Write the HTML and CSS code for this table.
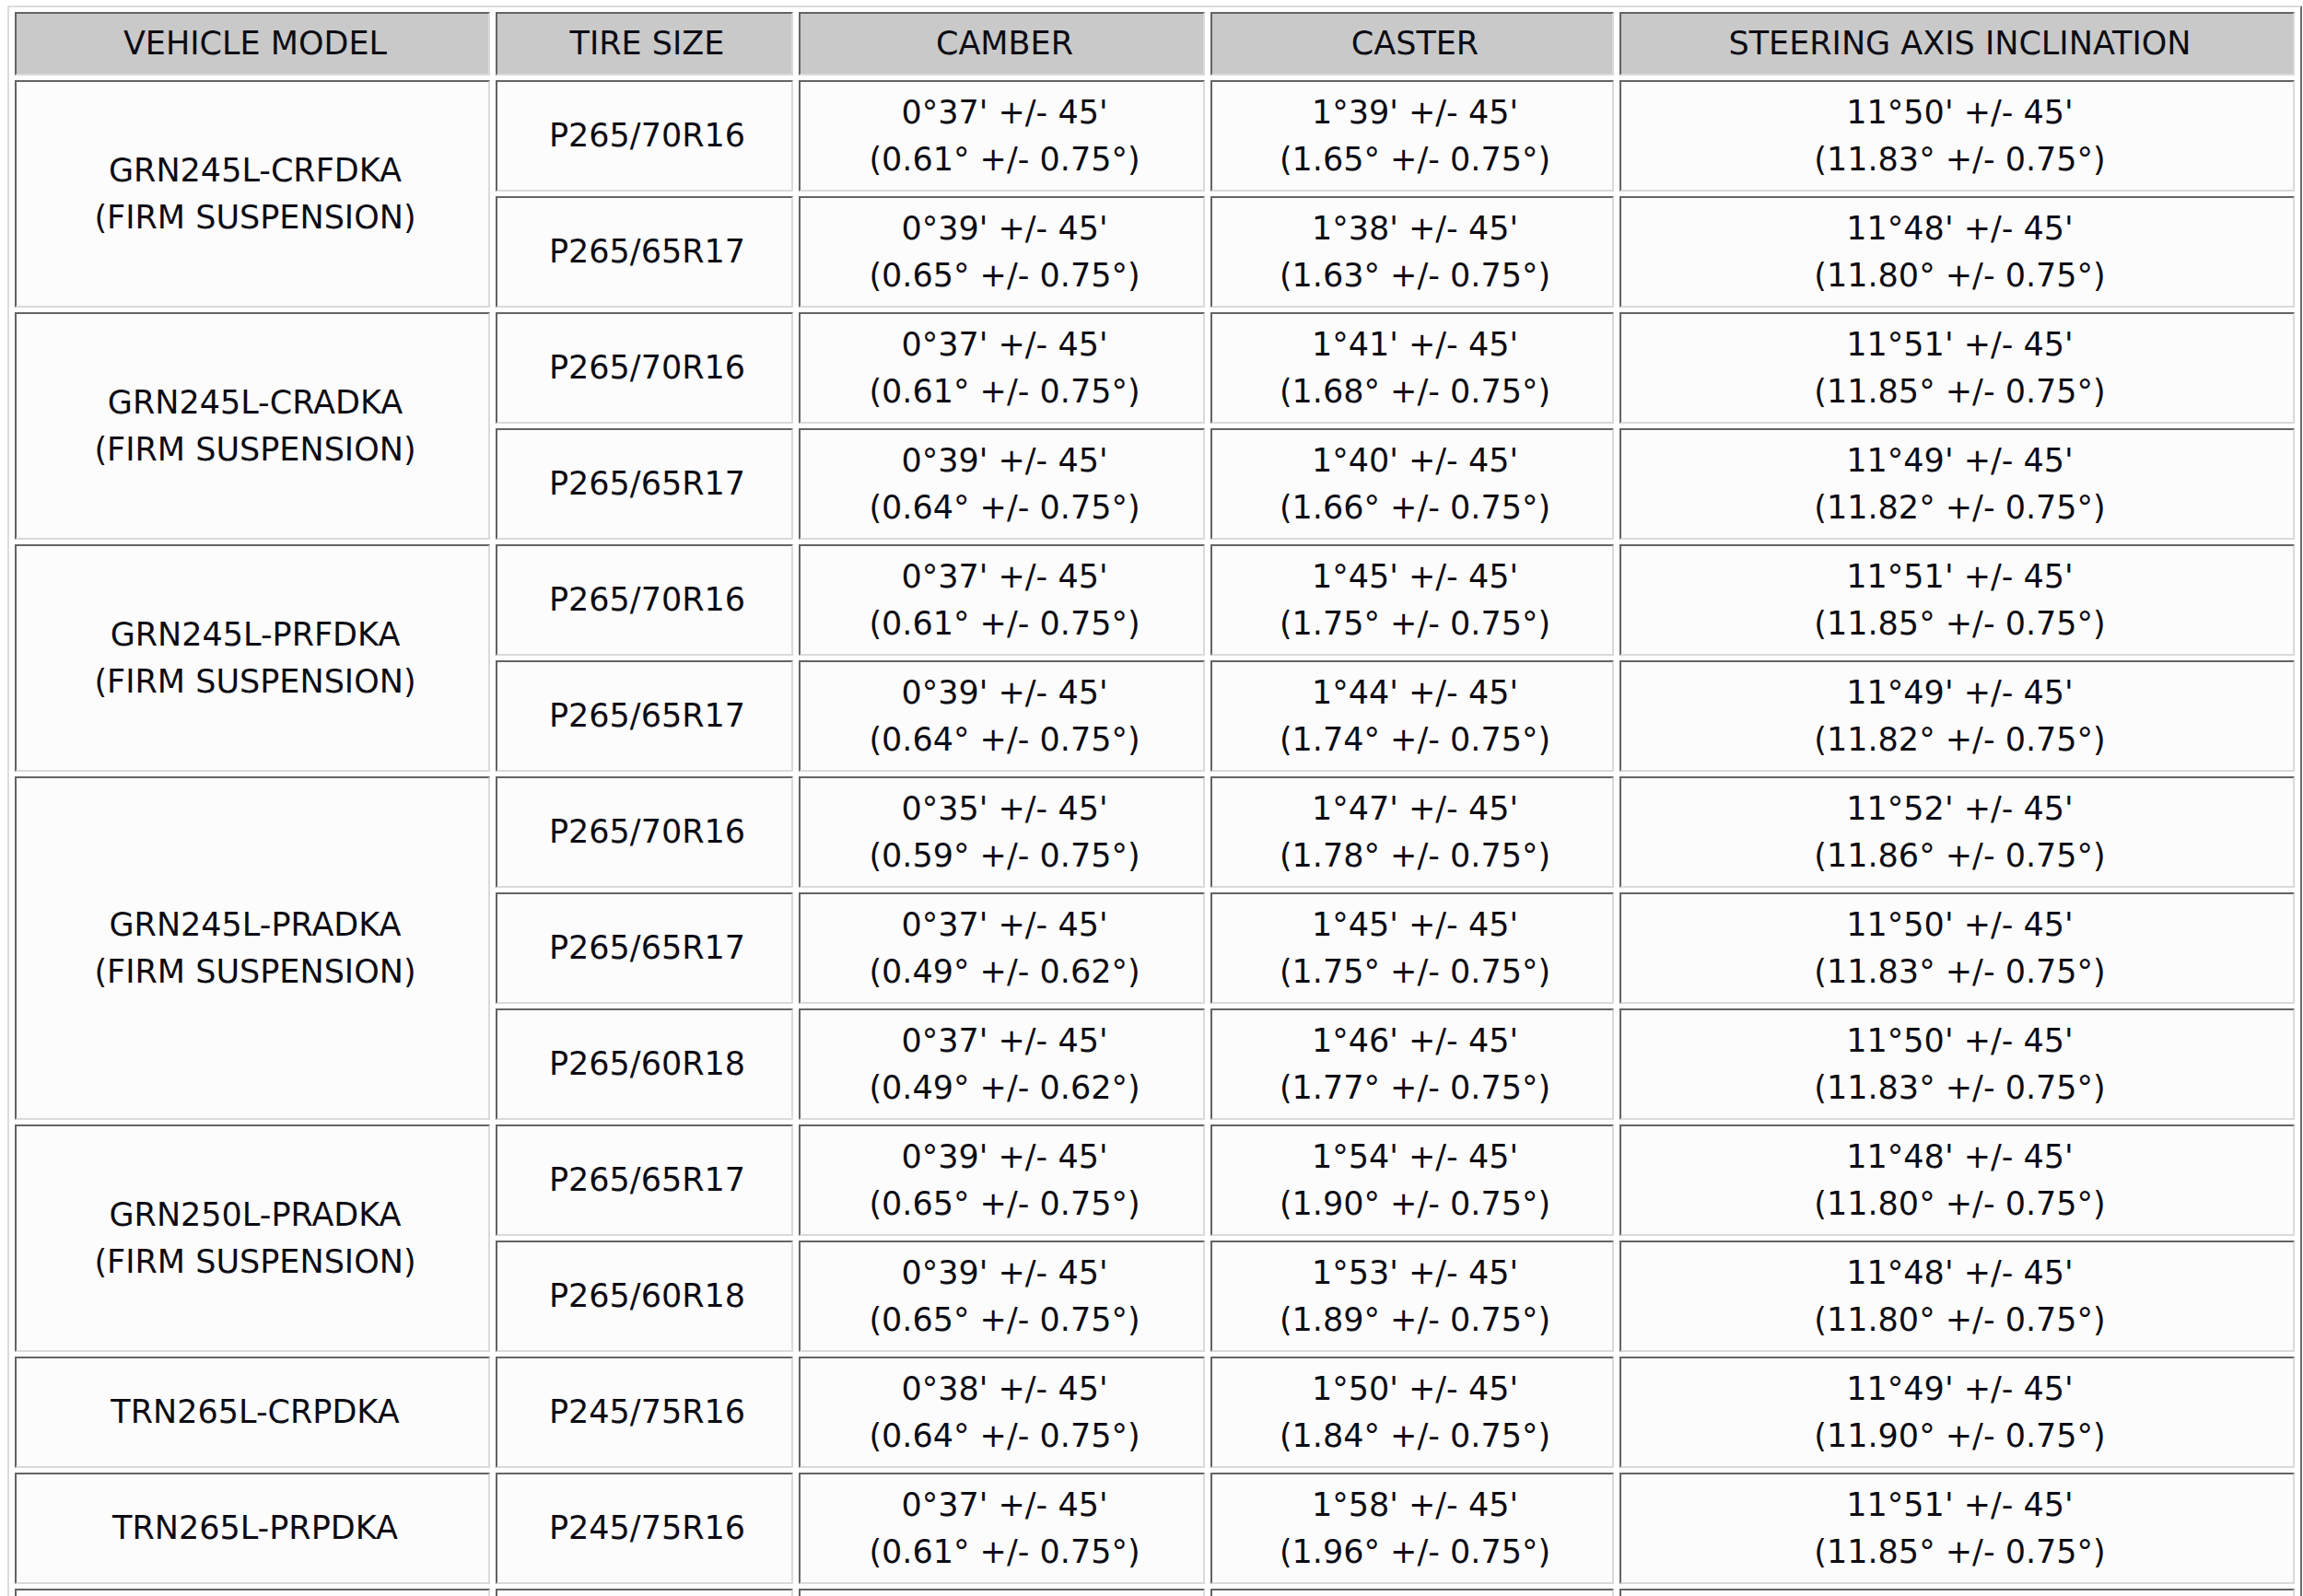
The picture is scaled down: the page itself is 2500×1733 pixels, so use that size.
FILE: index.html
```html
<!DOCTYPE html>
<html lang="en">
<head>
<meta charset="utf-8">
<title>Alignment Specifications</title>
<link rel="stylesheet" href="styles.css">
</head>
<body>
<table class="spec">
  <thead>
    <tr class="head">
      <th class="c-model">VEHICLE MODEL</th>
      <th class="c-tire">TIRE SIZE</th>
      <th class="c-camber">CAMBER</th>
      <th class="c-caster">CASTER</th>
      <th class="c-sai">STEERING AXIS INCLINATION</th>
    </tr>
  </thead>
  <tbody>
    <tr class="r">
      <td rowspan="2">GRN245L-CRFDKA<br>(FIRM SUSPENSION)</td>
      <td>P265/70R16</td>
      <td>0°37' +/- 45'<br>(0.61° +/- 0.75°)</td>
      <td>1°39' +/- 45'<br>(1.65° +/- 0.75°)</td>
      <td>11°50' +/- 45'<br>(11.83° +/- 0.75°)</td>
    </tr>
    <tr class="r">
      <td>P265/65R17</td>
      <td>0°39' +/- 45'<br>(0.65° +/- 0.75°)</td>
      <td>1°38' +/- 45'<br>(1.63° +/- 0.75°)</td>
      <td>11°48' +/- 45'<br>(11.80° +/- 0.75°)</td>
    </tr>
    <tr class="r">
      <td rowspan="2">GRN245L-CRADKA<br>(FIRM SUSPENSION)</td>
      <td>P265/70R16</td>
      <td>0°37' +/- 45'<br>(0.61° +/- 0.75°)</td>
      <td>1°41' +/- 45'<br>(1.68° +/- 0.75°)</td>
      <td>11°51' +/- 45'<br>(11.85° +/- 0.75°)</td>
    </tr>
    <tr class="r">
      <td>P265/65R17</td>
      <td>0°39' +/- 45'<br>(0.64° +/- 0.75°)</td>
      <td>1°40' +/- 45'<br>(1.66° +/- 0.75°)</td>
      <td>11°49' +/- 45'<br>(11.82° +/- 0.75°)</td>
    </tr>
    <tr class="r">
      <td rowspan="2">GRN245L-PRFDKA<br>(FIRM SUSPENSION)</td>
      <td>P265/70R16</td>
      <td>0°37' +/- 45'<br>(0.61° +/- 0.75°)</td>
      <td>1°45' +/- 45'<br>(1.75° +/- 0.75°)</td>
      <td>11°51' +/- 45'<br>(11.85° +/- 0.75°)</td>
    </tr>
    <tr class="r">
      <td>P265/65R17</td>
      <td>0°39' +/- 45'<br>(0.64° +/- 0.75°)</td>
      <td>1°44' +/- 45'<br>(1.74° +/- 0.75°)</td>
      <td>11°49' +/- 45'<br>(11.82° +/- 0.75°)</td>
    </tr>
    <tr class="r">
      <td rowspan="3">GRN245L-PRADKA<br>(FIRM SUSPENSION)</td>
      <td>P265/70R16</td>
      <td>0°35' +/- 45'<br>(0.59° +/- 0.75°)</td>
      <td>1°47' +/- 45'<br>(1.78° +/- 0.75°)</td>
      <td>11°52' +/- 45'<br>(11.86° +/- 0.75°)</td>
    </tr>
    <tr class="r">
      <td>P265/65R17</td>
      <td>0°37' +/- 45'<br>(0.49° +/- 0.62°)</td>
      <td>1°45' +/- 45'<br>(1.75° +/- 0.75°)</td>
      <td>11°50' +/- 45'<br>(11.83° +/- 0.75°)</td>
    </tr>
    <tr class="r">
      <td>P265/60R18</td>
      <td>0°37' +/- 45'<br>(0.49° +/- 0.62°)</td>
      <td>1°46' +/- 45'<br>(1.77° +/- 0.75°)</td>
      <td>11°50' +/- 45'<br>(11.83° +/- 0.75°)</td>
    </tr>
    <tr class="r">
      <td rowspan="2">GRN250L-PRADKA<br>(FIRM SUSPENSION)</td>
      <td>P265/65R17</td>
      <td>0°39' +/- 45'<br>(0.65° +/- 0.75°)</td>
      <td>1°54' +/- 45'<br>(1.90° +/- 0.75°)</td>
      <td>11°48' +/- 45'<br>(11.80° +/- 0.75°)</td>
    </tr>
    <tr class="r">
      <td>P265/60R18</td>
      <td>0°39' +/- 45'<br>(0.65° +/- 0.75°)</td>
      <td>1°53' +/- 45'<br>(1.89° +/- 0.75°)</td>
      <td>11°48' +/- 45'<br>(11.80° +/- 0.75°)</td>
    </tr>
    <tr class="r">
      <td>TRN265L-CRPDKA</td>
      <td>P245/75R16</td>
      <td>0°38' +/- 45'<br>(0.64° +/- 0.75°)</td>
      <td>1°50' +/- 45'<br>(1.84° +/- 0.75°)</td>
      <td>11°49' +/- 45'<br>(11.90° +/- 0.75°)</td>
    </tr>
    <tr class="r">
      <td>TRN265L-PRPDKA</td>
      <td>P245/75R16</td>
      <td>0°37' +/- 45'<br>(0.61° +/- 0.75°)</td>
      <td>1°58' +/- 45'<br>(1.96° +/- 0.75°)</td>
      <td>11°51' +/- 45'<br>(11.85° +/- 0.75°)</td>
    </tr>
    <tr class="r">
      <td></td>
      <td></td>
      <td></td>
      <td></td>
      <td></td>
    </tr>
  </tbody>
</table>
</body>
</html>
```

FILE: styles.css
```css
html, body {
  background: #ffffff;
}

body {
  margin: 6px 0 0 8px;
  font-family: "DejaVu Sans", Verdana, sans-serif;
  font-size: 35px;
  color: #0c0c14;
}

.spec {
  border-collapse: separate;
  border-spacing: 6px 5px;
  table-layout: fixed;
  width: 2491px;
  border-style: solid;
  border-width: 2px;
  border-color: #dcdcdc #6a6a6a #6a6a6a #dcdcdc;
}

.spec th,
.spec td {
  box-sizing: border-box;
  padding: 0 0 0 6px;
  text-align: center;
  vertical-align: middle;
  line-height: 51px;
  border-style: solid;
  border-width: 2px;
  border-color: #646464 #dadada #dadada #646464;
  font-weight: normal;
}

.spec th {
  background: #c9c9c9;
}

.spec td {
  background: #fcfcfc;
}

.head {
  height: 69px;
}

.r {
  height: 121px;
}

.c-model { width: 516px; }
.c-tire { width: 323px; }
.c-camber { width: 441px; }
.c-caster { width: 438px; }
.c-sai { width: 733px; }
```
